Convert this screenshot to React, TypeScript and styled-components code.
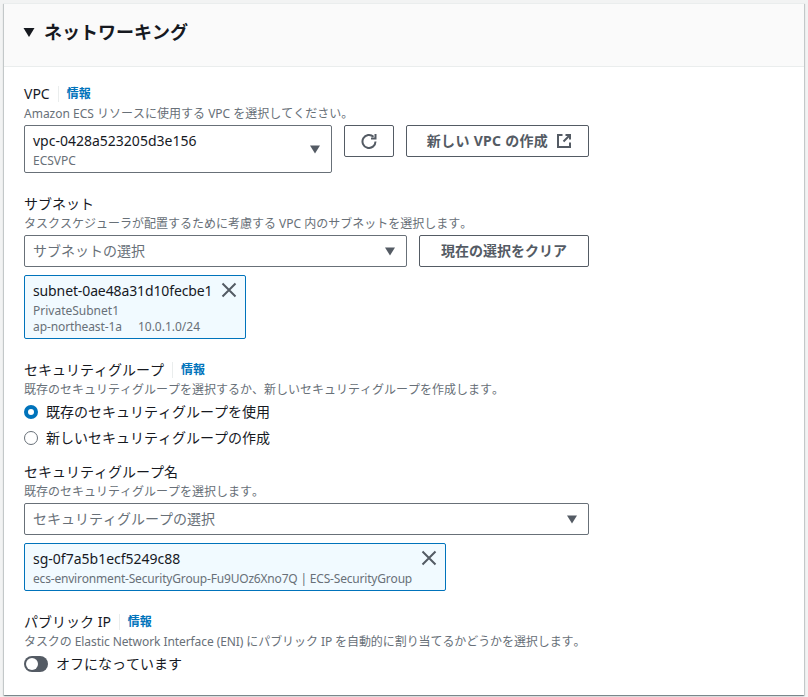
import styled, { createGlobalStyle } from "styled-components";

const GlobalStyle = createGlobalStyle`
    html, body {
        margin: 0;
        padding: 0;
        height: 100%;
        background: #f2f3f3;
    }
    body {
        font-family: "Noto Sans", "Noto Sans CJK JP", sans-serif;
        font-kerning: none;
        color: #16191f;
    }
`;

const Panel = styled.section`
    width: 800px;
    height: 692px;
    margin: 3px 0 0 4px;
    box-sizing: border-box;
    border-top: 1px solid #eaeded;
    background: #ffffff;
    box-shadow: 0 1px 1px 0 rgba(0, 28, 36, 0.3), 1px 1px 1px 0 rgba(0, 28, 36, 0.15), -1px 1px 1px 0 rgba(0, 28, 36, 0.15);
`;

const Header = styled.header`
    height: 63px;
    box-sizing: border-box;
    display: flex;
    align-items: center;
    gap: 9px;
    padding: 0 0 7px 19px;
    background: #fafafa;
    border-bottom: 1px solid #eaeded;
`;

const Title = styled.h2`
    margin: 0;
    font-size: 18px;
    line-height: 24px;
    font-weight: 700;
    color: #16191f;
`;

const Body = styled.div`
    padding: 17px 20px 0;
    display: flex;
    flex-direction: column;
`;

const Field = styled.div<{ $gap?: number }>`
    margin-bottom: ${(p) => p.$gap ?? 0}px;
`;

const LabelRow = styled.div`
    display: flex;
    align-items: flex-start;
    height: 22px;
`;

const Label = styled.span`
    font-size: 14px;
    line-height: 20px;
    color: #16191f;
`;

const Info = styled.a`
    margin: 2px 0 0 8px;
    padding-left: 8px;
    border-left: 1px solid #eaeded;
    font-size: 12px;
    line-height: 16px;
    font-weight: 700;
    color: #0073bb;
`;

const Desc = styled.div<{ $track?: number }>`
    font-size: 12px;
    line-height: 16px;
    margin-bottom: 3px;
    color: #687078;
    white-space: nowrap;
    letter-spacing: ${(p) => p.$track ?? 0}px;
`;

const Row = styled.div`
    display: flex;
    align-items: flex-start;
    gap: 12px;
`;

const Select = styled.div<{ $width: number; $tall?: boolean }>`
    width: ${(p) => p.$width}px;
    height: ${(p) => (p.$tall ? 48 : 32)}px;
    box-sizing: border-box;
    display: flex;
    align-items: center;
    justify-content: space-between;
    padding: 0 10px 0 8px;
    background: #ffffff;
    border: 1px solid #687078;
    border-radius: 2px;
`;

const Placeholder = styled.span`
    font-size: 14px;
    line-height: 20px;
    color: #687078;
`;

const Value = styled.div`
    display: flex;
    flex-direction: column;
    padding-top: 2px;
`;

const MainText = styled.span<{ $track?: number }>`
    font-size: 14px;
    line-height: 20px;
    margin-bottom: 2px;
    color: #16191f;
    white-space: nowrap;
    letter-spacing: ${(p) => p.$track ?? 0}px;
`;

const SubText = styled.span<{ $track?: number }>`
    font-size: 12px;
    line-height: 16px;
    color: #687078;
    white-space: nowrap;
    letter-spacing: ${(p) => p.$track ?? 0}px;
`;

const Tags = styled.div`
    display: flex;
    gap: 16px;
`;

const Caret = styled.svg`
    width: 12px;
    height: 12px;
    fill: #545b64;
    flex: none;
`;

const HeaderCaret = styled(Caret)`
    fill: #16191f;
`;

const Button = styled.button<{ $width: number; $track?: number; $shift?: number }>`
    width: ${(p) => p.$width}px;
    height: 32px;
    box-sizing: border-box;
    display: flex;
    align-items: center;
    justify-content: center;
    gap: 8px;
    padding: 0 0 0 ${(p) => p.$shift ?? 0}px;
    background: #ffffff;
    border: 1px solid #545b64;
    border-radius: 2px;
    font-family: inherit;
    font-kerning: none;
    font-size: 14px;
    line-height: 20px;
    font-weight: 700;
    letter-spacing: ${(p) => p.$track ?? 0}px;
    color: #545b64;
`;

const Icon = styled.svg`
    width: 16px;
    height: 16px;
    fill: none;
    stroke: #545b64;
    stroke-width: 2;
    flex: none;
`;

const Token = styled.div<{ $width: number; $height: number }>`
    width: ${(p) => p.$width}px;
    height: ${(p) => p.$height}px;
    box-sizing: border-box;
    margin-top: 8px;
    padding: 3px 8px 0;
    display: flex;
    justify-content: space-between;
    align-items: flex-start;
    background: #f1faff;
    border: 1px solid #0073bb;
    border-radius: 2px;
`;

const Dismiss = styled.svg`
    width: 16px;
    height: 16px;
    margin: 3px 0 0 8px;
    fill: none;
    stroke: #545b64;
    stroke-width: 2;
    flex: none;
`;

const RadioGroup = styled.div`
    display: flex;
    flex-direction: column;
    gap: 6px;
    margin-top: 4px;
`;

const RadioRow = styled.div`
    display: flex;
    align-items: center;
    gap: 8px;
    height: 20px;
    font-size: 14px;
    line-height: 20px;
    color: #16191f;
`;

const Radio = styled.span<{ $checked?: boolean }>`
    width: 14px;
    height: 14px;
    box-sizing: border-box;
    border-radius: 50%;
    background: #ffffff;
    border: ${(p) => (p.$checked ? "4px solid #0073bb" : "1px solid #687078")};
`;

const ToggleRow = styled.div`
    display: flex;
    align-items: center;
    gap: 8px;
    height: 20px;
    margin-top: 4px;
    font-size: 14px;
    line-height: 20px;
    color: #16191f;
`;

const Toggle = styled.span`
    width: 24px;
    height: 16px;
    box-sizing: border-box;
    padding: 2px;
    border-radius: 8px;
    background: #545b64;
    display: flex;
`;

const Knob = styled.span`
    width: 12px;
    height: 12px;
    border-radius: 50%;
    background: #ffffff;
`;

const CaretIcon = () => (
    <Caret viewBox="0 0 12 12">
        <path d="M1 2.5h10L6 10.5z" />
    </Caret>
);

const CloseIcon = () => (
    <Dismiss viewBox="0 0 16 16">
        <path d="M1.5 1.5l13 13M14.5 1.5l-13 13" />
    </Dismiss>
);

const App = () => {
    return (
        <>
            <GlobalStyle />
            <Panel>
                <Header>
                    <HeaderCaret viewBox="0 0 12 12">
                        <path d="M0.5 2h11L6 11z" />
                    </HeaderCaret>
                    <Title>ネットワーキング</Title>
                </Header>
                <Body>
                    <Field $gap={21}>
                        <LabelRow>
                            <Label>VPC</Label>
                            <Info>情報</Info>
                        </LabelRow>
                        <Desc>Amazon ECS リソースに使用する VPC を選択してください。</Desc>
                        <Row>
                            <Select $width={308} $tall>
                                <Value>
                                    <MainText>vpc-0428a523205d3e156</MainText>
                                    <SubText>ECSVPC</SubText>
                                </Value>
                                <CaretIcon />
                            </Select>
                            <Button $width={50}>
                                <Icon viewBox="0 0 16 16">
                                    <path d="M14.5 8.5a6.5 6.5 0 1 1-2-4.7" />
                                    <path d="M14.5 1v4.5H10" />
                                </Icon>
                            </Button>
                            <Button $width={183} $track={0.3} $shift={4}>
                                新しい VPC の作成
                                <Icon viewBox="0 0 16 16">
                                    <path d="M6.5 2H2v12h12V9.5" />
                                    <path d="M9.5 2H14v4.5M14 2L7.5 8.5" />
                                </Icon>
                            </Button>
                        </Row>
                    </Field>
                    <Field $gap={21}>
                        <LabelRow>
                            <Label>サブネット</Label>
                        </LabelRow>
                        <Desc>タスクスケジューラが配置するために考慮する VPC 内のサブネットを選択します。</Desc>
                        <Row>
                            <Select $width={383}>
                                <Placeholder>サブネットの選択</Placeholder>
                                <CaretIcon />
                            </Select>
                            <Button $width={170}>現在の選択をクリア</Button>
                        </Row>
                        <Token $width={222} $height={64}>
                            <Value>
                                <MainText $track={-0.12}>subnet-0ae48a31d10fecbe1</MainText>
                                <SubText>PrivateSubnet1</SubText>
                                <Tags>
                                    <SubText $track={-0.1}>ap-northeast-1a</SubText>
                                    <SubText>10.0.1.0/24</SubText>
                                </Tags>
                            </Value>
                            <CloseIcon />
                        </Token>
                    </Field>
                    <Field $gap={14}>
                        <LabelRow>
                            <Label>セキュリティグループ</Label>
                            <Info>情報</Info>
                        </LabelRow>
                        <Desc>既存のセキュリティグループを選択するか、新しいセキュリティグループを作成します。</Desc>
                        <RadioGroup>
                            <RadioRow>
                                <Radio $checked />
                                既存のセキュリティグループを使用
                            </RadioRow>
                            <RadioRow>
                                <Radio />
                                新しいセキュリティグループの作成
                            </RadioRow>
                        </RadioGroup>
                    </Field>
                    <Field $gap={21}>
                        <LabelRow>
                            <Label>セキュリティグループ名</Label>
                        </LabelRow>
                        <Desc>既存のセキュリティグループを選択します。</Desc>
                        <Select $width={565}>
                            <Placeholder>セキュリティグループの選択</Placeholder>
                            <CaretIcon />
                        </Select>
                        <Token $width={422} $height={48}>
                            <Value>
                                <MainText>sg-0f7a5b1ecf5249c88</MainText>
                                <SubText $track={-0.19}>ecs-environment-SecurityGroup-Fu9UOz6Xno7Q | ECS-SecurityGroup</SubText>
                            </Value>
                            <CloseIcon />
                        </Token>
                    </Field>
                    <Field>
                        <LabelRow>
                            <Label>パブリック IP</Label>
                            <Info>情報</Info>
                        </LabelRow>
                        <Desc $track={-0.08}>タスクの Elastic Network Interface (ENI) にパブリック IP を自動的に割り当てるかどうかを選択します。</Desc>
                        <ToggleRow>
                            <Toggle>
                                <Knob />
                            </Toggle>
                            オフになっています
                        </ToggleRow>
                    </Field>
                </Body>
            </Panel>
        </>
    );
};

export default App;
